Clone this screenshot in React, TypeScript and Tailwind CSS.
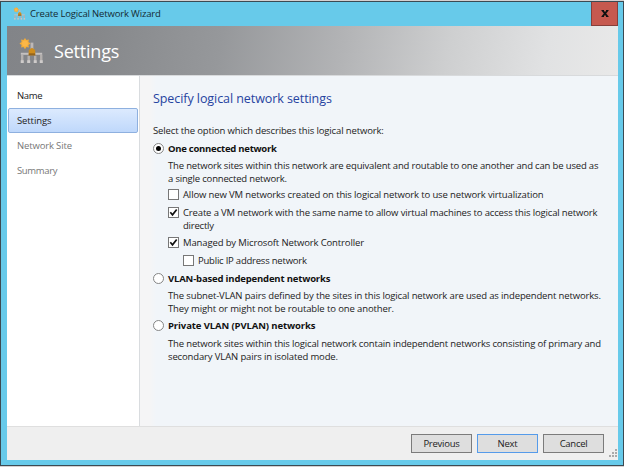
import type { ReactNode } from 'react';

function NetworkIcon({ className }: { className: string }) {
  return (
    <svg viewBox="0 0 26 28" className={className} fill="none">
      <path d="M1.500 17h23" stroke="#c4c1c0" strokeWidth="2.200" />
      <path d="M3 27v-9M10 27v-8M17 27v-8M23.500 27v-9" stroke="#b4b0ae" strokeWidth="2.600" />
      <path d="M3 27v-3M10 27v-3M17 27v-3M23.500 27v-3" stroke="#cfcccb" strokeWidth="3.200" />
      <path d="M13.500 5v8" stroke="#bdb8b8" strokeWidth="3" />
      <path d="M10 13l3.500-2.500L17 13v5.500h-7z" fill="#cf8d1c" />
      <path d="M10 16.500h7v2.200h-7z" fill="#95651a" />
      <path d="M6 0l1.500 2.200 2.700-.7-.5 2.700L12 6 9.700 7.600l.5 2.700-2.700-.6L6 12l-1.600-2.300-2.600.6.500-2.700L0 6l2.300-1.700-.500-2.700 2.600.6z" fill="#f3ac38" />
      <circle cx="6" cy="6" r="3.200" fill="#fbb748" />
    </svg>
  );
}

function Radio({ checked = false }: { checked?: boolean }) {
  return (
    <span className="flex size-[11px] shrink-0 items-center justify-center rounded-full border border-[#858585] bg-white">
      {checked && <span className="size-[5px] rounded-full bg-black" />}
    </span>
  );
}

function Check({ checked = false }: { checked?: boolean }) {
  return (
    <span className="mt-px flex size-[11px] shrink-0 items-center justify-center border border-[#777] bg-white">
      {checked && (
        <svg viewBox="0 0 9 9" className="size-[9px]" fill="none">
          <path d="M1.300 4.300L3.500 6.800 7.700 1.500" stroke="#111" strokeWidth="1.700" />
        </svg>
      )}
    </span>
  );
}

function Line({ track, children }: { track: string; children: ReactNode }) {
  return <div className={`h-[13px] whitespace-nowrap ${track}`}>{children}</div>;
}

export default function App() {
  return (
    <div className="flex h-[467px] w-[624px] flex-col overflow-hidden bg-[#d5d0d0] font-['Open_Sans','Noto_Sans',sans-serif] text-[9.5px] leading-[13px] text-[#222]">
      <div className="mt-px flex h-[465px] flex-col border border-[#3c4a52] bg-[#67caea] pr-[5px] pb-[5px] pl-[6px]">
        <div className="flex h-6 shrink-0 items-start">
          <NetworkIcon className="mt-[5px] ml-[6px] h-[13px] w-[13px]" />
          <span className="mt-[5px] ml-1 whitespace-nowrap tracking-[-0.165px] text-[#142a33]">Create Logical Network Wizard</span>
          <span className="ml-auto flex h-6 w-[27px] items-center justify-center border border-t-0 border-[#873f3a] bg-[#c6594f]">
            <svg viewBox="0 0 8 7" className="h-[7px] w-2" fill="none">
              <path d="M1.500.5l5 6M6.500.5l-5 6" stroke="#111" strokeWidth="1.900" />
              <path d="M.5.500h2.500M5 .500h2.500M.5 6.500h2.500M5 6.500h2.500" stroke="#111" />
            </svg>
          </span>
        </div>

        <div className="flex h-[49px] shrink-0 items-start bg-[linear-gradient(100deg,#828488_0%,#86888b_15%,#96989b_35%,#b3b4b6_55%,#cecfd0_72%,#e1e2e3_88%,#e9e9e9_100%)]">
          <NetworkIcon className="mt-3 ml-[12px] h-[26px] w-[25px]" />
          <span className="mt-[13px] ml-[10px] text-[18px] leading-6 tracking-[-0.2px] text-white">Settings</span>
        </div>

        <div className="flex h-[351px] shrink-0 border-t border-[#d8dadc]">
          <div className="flex w-[133px] shrink-0 flex-col border-r border-[#d9dcdf] bg-white px-px pt-[7px]">
            <div className="flex h-[25px] items-center pl-[9px] tracking-[-0.367px]">Name</div>
            <div className="flex h-[25px] items-center rounded-[2px] border border-[#8eb0df] bg-linear-to-b from-[#dceafe] to-[#bfd8fb] pl-2 tracking-[-0.107px]">Settings</div>
            <div className="flex h-[25px] items-center pl-[9px] tracking-[-0.147px] text-[#777]">Network Site</div>
            <div className="flex h-[25px] items-center pl-[9px] tracking-[-0.343px] text-[#777]">Summary</div>
          </div>

          <div className="min-w-0 flex-1 bg-[linear-gradient(90deg,#f5f5f6_0px,#f5f5f6_10px,#f1f5f9_16px)] pl-[13px]">
            <h1 className="mt-[14px] h-[18px] text-[12.5px] leading-[18px] tracking-[-0.07px] whitespace-nowrap text-[#2643a0]">
              Specify logical network settings
            </h1>
            <div className="mt-[16px]">
              <Line track="tracking-[-0.134px]">Select the option which describes this logical network:</Line>
            </div>

            <div className="mt-[5px] flex items-center gap-1 font-bold text-[#111]">
              <Radio checked />
              <Line track="tracking-[-0.255px]">One connected network</Line>
            </div>
            <div className="mt-1 pl-[15px]">
              <Line track="tracking-[-0.163px]">The network sites within this network are equivalent and routable to one another and can be used as</Line>
              <Line track="tracking-[-0.18px]">a single connected network.</Line>
              <div className="mt-[3px] flex gap-1">
                <Check />
                <Line track="tracking-[-0.134px]">Allow new VM networks created on this logical network to use network virtualization</Line>
              </div>
              <div className="mt-[5px] flex gap-1">
                <Check checked />
                <div>
                  <Line track="tracking-[-0.149px]">Create a VM network with the same name to allow virtual machines to access this logical network</Line>
                  <Line track="tracking-[-0.21px]">directly</Line>
                </div>
              </div>
              <div className="mt-1 flex gap-1">
                <Check checked />
                <Line track="tracking-[-0.129px]">Managed by Microsoft Network Controller</Line>
              </div>
              <div className="mt-[5px] flex gap-1 pl-[15px]">
                <Check />
                <Line track="tracking-[-0.217px]">Public IP address network</Line>
              </div>
            </div>

            <div className="mt-[5px] flex items-center gap-1 font-bold text-[#111]">
              <Radio />
              <Line track="tracking-[-0.167px]">VLAN-based independent networks</Line>
            </div>
            <div className="mt-1 pl-[15px]">
              <Line track="tracking-[-0.138px]">The subnet-VLAN pairs defined by the sites in this logical network are used as independent networks.</Line>
              <Line track="tracking-[-0.11px]">They might or might not be routable to one another.</Line>
            </div>

            <div className="mt-1 flex items-center gap-1 font-bold text-[#111]">
              <Radio />
              <Line track="tracking-[-0.104px]">Private VLAN (PVLAN) networks</Line>
            </div>
            <div className="mt-[5px] pl-[15px]">
              <Line track="tracking-[-0.157px]">The network sites within this logical network contain independent networks consisting of primary and</Line>
              <Line track="tracking-[-0.132px]">secondary VLAN pairs in isolated mode.</Line>
            </div>
          </div>
        </div>

        <div className="flex flex-1 items-start justify-end border-t border-[#dfdfdf] bg-[#efefef]">
          <div className="mt-[7px] flex gap-[5px]">
            <button className="h-[19px] w-[61px] border border-[#7b7b7b] bg-[#dedede] leading-[15px] tracking-[-0.24px]">Previous</button>
            <button className="h-[19px] w-[61px] border border-[#559bea] bg-[#dedede] leading-[15px] tracking-[-0.27px]">Next</button>
            <button className="h-[19px] w-[61px] border border-[#7b7b7b] bg-[#dedede] leading-[15px] tracking-[-0.28px]">Cancel</button>
          </div>
          <svg viewBox="0 0 10 10" className="mt-[22px] mr-px ml-[3px] size-[10px]" fill="#a9a9a9">
            <path d="M8 0h2v2H8zM8 3h2v2H8zM8 6h2v2H8zM5 3h2v2H5zM5 6h2v2H5zM2 6h2v2H2z" />
          </svg>
        </div>
      </div>
    </div>
  );
}
